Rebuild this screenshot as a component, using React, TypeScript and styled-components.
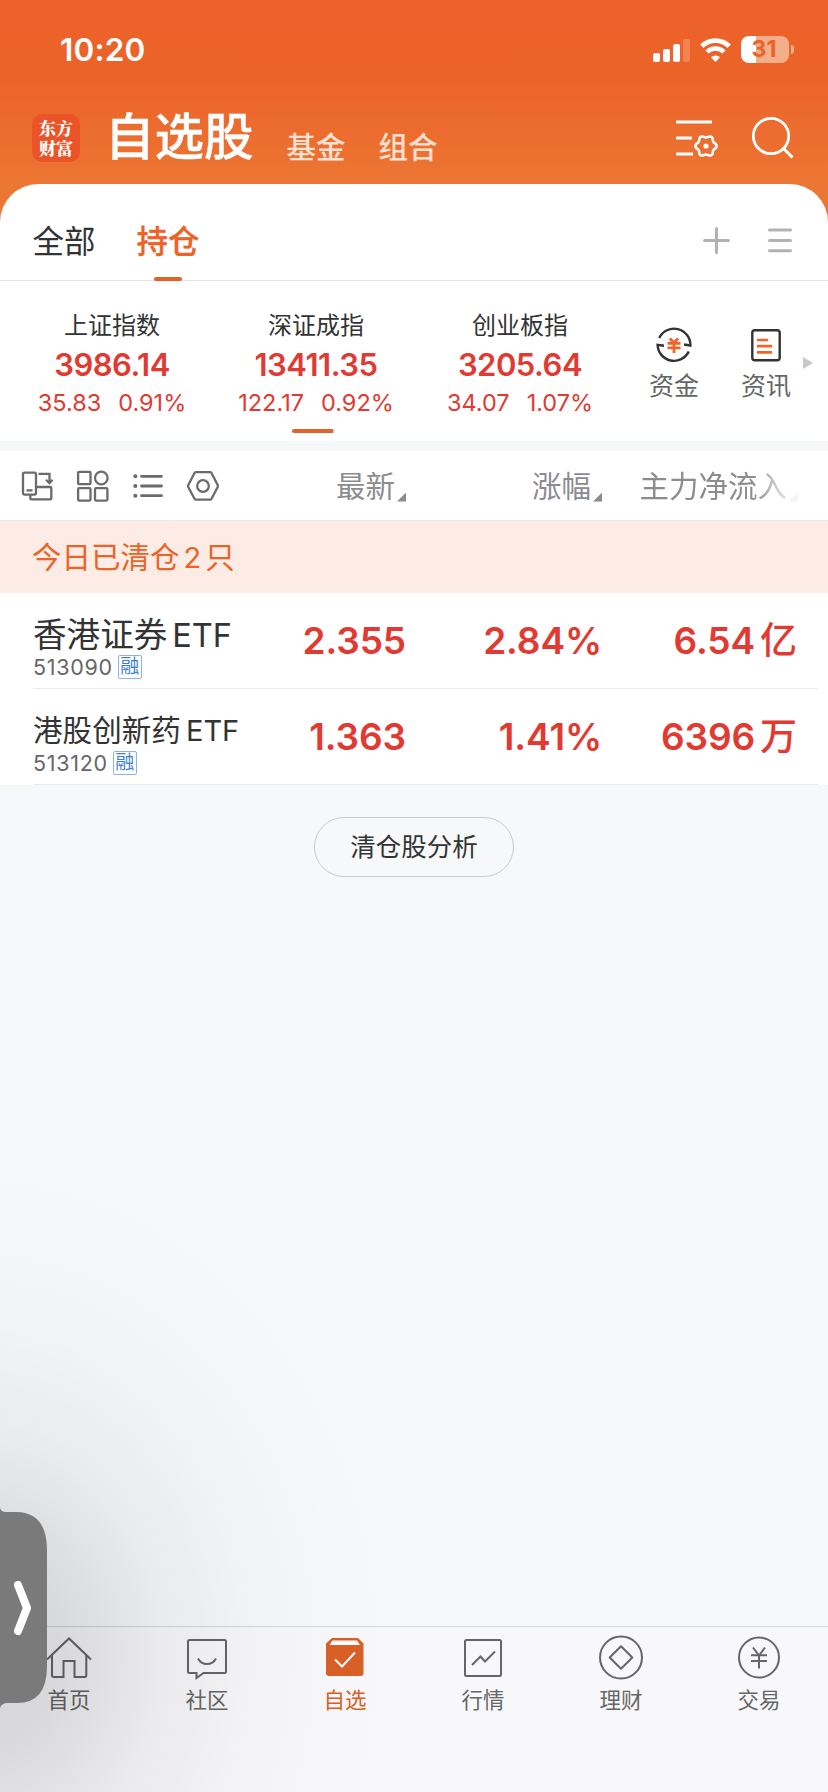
import React from "react";
import styled, { createGlobalStyle, css } from "styled-components";

const ORANGE = "#ec6227";
const RED = "#e03a32";

const GlobalStyle = createGlobalStyle`
  * { box-sizing: border-box; }
  body {
    margin: 0;
    background: #f7f8fa;
    font-family: Inter, "Noto Sans CJK SC", sans-serif;
    color: #333;
  }
  svg { display: block; flex: none; overflow: visible; }
`;

const Screen = styled.div`
  position: relative;
  display: flex;
  flex-direction: column;
  width: 828px;
  height: 1792px;
  overflow: hidden;
  background: #f7f8fa;
  white-space: nowrap;
`;

/* ---------- top area ---------- */

const Top = styled.div`
  background: linear-gradient(#ec622a 0, #ec632a 80px, #ec7633 184px, #ec7934 230px);
`;

const StatusBar = styled.div`
  display: flex;
  align-items: center;
  height: 99px;
  padding: 0 34px 0 60px;
`;

const Clock = styled.div`
  flex: 1;
  font-size: 31.5px;
  font-weight: 600;
  letter-spacing: 0.2px;
  line-height: 40px;
  color: #fff;
  padding-top: 1px;
`;

const StatusIcons = styled.div`
  display: flex;
  align-items: center;
  gap: 10px;
`;

const Battery = styled.div`
  display: flex;
  align-items: center;
  gap: 2px;
`;

const BatteryBody = styled.div`
  width: 48px;
  height: 27px;
  border-radius: 8px;
  background: linear-gradient(90deg, #fff 15px, #f4ae8a 15px);
  font-size: 23px;
  font-weight: 700;
  line-height: 27px;
  text-align: center;
  color: ${ORANGE};
  padding-right: 2px;
`;

const BatteryCap = styled.div`
  width: 3px;
  height: 9px;
  border-radius: 0 5px 5px 0;
  background: #f4ae8a;
`;

const Header = styled.div`
  display: flex;
  height: 85px;
  padding: 15px 34px 0 32px;
`;

const Logo = styled.div`
  width: 48px;
  height: 48px;
  padding: 4px 7px;
  border-radius: 10px;
  background: #eb5429;
  color: #fff;
  font-family: "Noto Serif CJK SC", "Noto Sans CJK SC", serif;
  font-size: 17px;
  font-weight: 900;
  line-height: 20px;
  white-space: normal;
`;

const MainTitle = styled.h1`
  margin: -3px 0 0 25px;
  font-size: 49.5px;
  font-weight: 500;
  line-height: 52px;
  letter-spacing: 0;
  color: #fff;
  -webkit-text-stroke: 0.4px #fff;
`;

const HeaderTabs = styled.div`
  display: flex;
  flex: 1;
  gap: 33px;
  margin-left: 33px;
  padding-top: 13px;
  font-size: 29.5px;
  font-weight: 500;
  line-height: 40px;
  color: #fde0d1;
`;

const HeaderIcons = styled.div`
  display: flex;
  gap: 34px;
  padding-top: 3px;
`;

/* ---------- content panel ---------- */

const Panel = styled.div`
  background: #fff;
  border-radius: 38px 38px 0 0;
`;

const GroupTabs = styled.div`
  display: flex;
  align-items: center;
  height: 97px;
  padding: 16px 36px 0 32px;
  border-bottom: 1px solid #e2e2e2;
`;

const GroupTab = styled.div<{ $active?: boolean }>`
  position: relative;
  width: 64px;
  height: 80px;
  margin-right: 40px;
  font-size: 31.5px;
  line-height: 84px;
  text-align: center;
  ${(p) =>
    p.$active &&
    css`
      color: ${ORANGE};
      font-weight: 500;
      -webkit-text-stroke: 0.3px ${ORANGE};
      &::after {
        content: "";
        position: absolute;
        left: 18px;
        bottom: -1px;
        width: 28px;
        height: 4px;
        border-radius: 2px;
        background: #e0632a;
      }
    `}
`;

const GroupActions = styled.div`
  display: flex;
  gap: 38px;
  margin-left: auto;
`;

const IndexStrip = styled.div`
  position: relative;
  display: flex;
  height: 160px;
  padding: 26px 15px 0 10px;
`;

const IndexCard = styled.div`
  flex: none;
  width: 204px;
  text-align: center;
`;

const IndexName = styled.div`
  font-size: 24px;
  line-height: 38px;
`;

const IndexValue = styled.div`
  font-size: 31px;
  font-weight: 600;
  line-height: 40px;
  letter-spacing: -0.5px;
  color: ${RED};
`;

const IndexChange = styled.div`
  display: flex;
  justify-content: center;
  gap: 17px;
  font-size: 23.5px;
  font-weight: 400;
  line-height: 35px;
  color: ${RED};
`;

const StripThumb = styled.div`
  position: absolute;
  left: 292px;
  bottom: 8px;
  width: 43px;
  height: 4px;
  border-radius: 2px;
  background: linear-gradient(90deg, #e0632a 41px, #dcdce0 41px);
`;

const Shortcuts = styled.div`
  display: flex;
  gap: 32px;
  margin-left: 22px;
`;

const Shortcut = styled.div`
  display: flex;
  flex-direction: column;
  align-items: center;
  width: 60px;
  padding-top: 18px;
  font-size: 25px;
  line-height: 42px;
  color: #666;
`;

const StripArrow = styled.div`
  margin: 50px 0 0 auto;
`;

const Band = styled.div`
  height: 10px;
  background: #f7f8fa;
`;

const TableHead = styled.div`
  display: grid;
  grid-template-columns: 220px 166px 196px 196px;
  align-items: center;
  height: 70px;
  padding-left: 20px;
  border-bottom: 1px solid #ececee;
`;

const Tools = styled.div`
  display: flex;
  gap: 23.5px;
`;

const HeadCell = styled.div<{ $fade?: boolean }>`
  display: flex;
  justify-content: flex-end;
  align-items: flex-end;
  gap: 2px;
  font-size: 29.5px;
  line-height: 42px;
  color: #8c8c8f;
  ${(p) => p.$fade && "mask-image: linear-gradient(90deg, #000 calc(100% - 45px), rgba(0, 0, 0, 0.1) calc(100% - 6px));"}
`;

const SortMark = styled.i`
  width: 9px;
  height: 9px;
  margin-bottom: 5px;
  background: #8c8c8f;
  clip-path: polygon(100% 0, 100% 100%, 0 100%);
`;

const Notice = styled.div`
  height: 72px;
  padding-left: 32px;
  font-size: 29.5px;
  line-height: 72px;
  color: ${ORANGE};
  background: #fcece5;
`;

const Count = styled.span`
  margin: 0 4px 0 4px;
  font-size: 29px;
`;

const Row = styled.div`
  display: grid;
  grid-template-columns: 240px 133px 196px 195px;
  height: 96px;
  margin: 0 10px 0 33px;
  border-bottom: 1px solid #ececee;
`;

const Stock = styled.div`
  display: flex;
  flex-direction: column;
  padding-top: 22px;
`;

const StockName = styled.div<{ $small?: boolean }>`
  height: 39px;
  font-size: ${(p) => (p.$small ? 29.6 : 33.6)}px;
  line-height: 39px;
  span {
    margin-left: 5px;
    font-size: ${(p) => (p.$small ? 29 : 32.5)}px;
  }
`;

const StockCode = styled.div`
  display: flex;
  align-items: center;
  gap: 5px;
  height: 25px;
  font-size: 21.5px;
  letter-spacing: 0.7px;
  color: #666;
`;

const MarginTag = styled.span`
  width: 24px;
  height: 24px;
  border: 1px solid #8fb2e6;
  border-radius: 2px;
  font-size: 19px;
  line-height: 22px;
  letter-spacing: 0;
  text-align: center;
  color: #3f7fd6;
`;

const Figure = styled.div`
  justify-self: end;
  font-size: 37px;
  font-weight: 600;
  line-height: 96px;
  letter-spacing: -0.1px;
  color: ${RED};
  span {
    margin-left: 5px;
    font-weight: 500;
  }
`;

const AnalyseButton = styled.button`
  align-self: center;
  width: 200px;
  height: 60px;
  margin-top: 32px;
  padding: 0;
  border: 1px solid #c9cacc;
  border-radius: 30px;
  background: transparent;
  font-family: inherit;
  font-size: 25.5px;
  line-height: 58px;
  color: #333;
`;

/* ---------- bottom bar ---------- */

const BottomNav = styled.nav`
  display: grid;
  grid-template-columns: repeat(6, 1fr);
  height: 166px;
  margin-top: auto;
  padding-top: 7px;
  background: #f8f8fa;
  border-top: 1px solid #d5d5d8;
`;

const NavItem = styled.div<{ $active?: boolean }>`
  display: flex;
  flex-direction: column;
  align-items: center;
  font-size: 21.5px;
  line-height: 30px;
  color: ${(p) => (p.$active ? "#d95f26" : "#666")};
  svg { margin-bottom: 5px; }
`;

/* ---------- floating handle ---------- */

const HandleShadow = styled.div`
  position: absolute;
  left: 0;
  bottom: 0;
  width: 460px;
  height: 760px;
  background: radial-gradient(
    ellipse 430px 510px at -20px 620px,
    rgba(0, 0, 0, 0.15) 0%,
    rgba(0, 0, 0, 0.12) 20%,
    rgba(0, 0, 0, 0.055) 42%,
    rgba(0, 0, 0, 0.018) 65%,
    rgba(0, 0, 0, 0.005) 86%,
    transparent 100%
  );
`;

const Handle = styled.div`
  position: absolute;
  left: 0;
  top: 1508px;
`;

/* ---------- icons ---------- */

const SignalIcon = () => (
  <svg width="37" height="24" viewBox="0 0 37 24" fill="#fff">
    <rect x="0" y="15" width="7" height="9" rx="2" />
    <rect x="10" y="11" width="7" height="13" rx="2" />
    <rect x="20" y="6" width="7" height="18" rx="2" />
    <rect x="30" y="1" width="7" height="23" rx="2" fill="#f2854f" />
  </svg>
);

const WifiIcon = () => (
  <svg width="31" height="24" viewBox="0 0 31 24" fill="none" stroke="#fff">
    <path d="M1.800 8.200A19.600 19.600 0 0 1 29.200 8.200" strokeWidth="4.8" />
    <path d="M7 14A12.200 12.200 0 0 1 24 14" strokeWidth="4.5" />
    <path d="M15.500 24 10.900 19.200A6.800 6.800 0 0 1 20.100 19.200Z" fill="#fff" stroke="none" />
  </svg>
);

const gearOutline = Array.from({ length: 96 }, (_, i) => {
  const a = (i / 96) * Math.PI * 2;
  const r = 9.5 + 1.1 * Math.cos(6 * a);
  return `${(30 + r * Math.cos(a)).toFixed(2)},${(29 + r * Math.sin(a)).toFixed(2)}`;
}).join(" ");

const ListGearIcon = () => (
  <svg width="42" height="42" viewBox="0 0 42 42" fill="none" stroke="#fff">
    <path d="M0 5H36M0 21H16M0 37H17" strokeWidth="3" />
    <polygon points={gearOutline} strokeWidth="2.6" strokeLinejoin="round" />
    <circle cx="30" cy="29" r="2.6" fill="#fff" stroke="none" />
  </svg>
);

const SearchIcon = () => (
  <svg width="42" height="42" viewBox="0 0 42 42" fill="none" stroke="#fff">
    <circle cx="19" cy="19" r="17.7" strokeWidth="2.8" />
    <path d="M31.500 31.500 40.500 40.500" strokeWidth="3" />
  </svg>
);

const PlusIcon = () => (
  <svg width="27" height="27" viewBox="0 0 27 27" stroke="#b2b2b2" strokeWidth="3" strokeLinecap="round">
    <path d="M1.600 13.500H25.400M13.500 1.600V25.400" />
  </svg>
);

const MenuIcon = () => (
  <svg width="24" height="27" viewBox="0 0 24 27" stroke="#b2b2b2" strokeWidth="3" strokeLinecap="round">
    <path d="M1.500 3H22.500M1.500 13.400H22.500M1.500 23.800H22.500" />
  </svg>
);

const FundsIcon = () => (
  <svg width="40" height="40" viewBox="0 0 40 40" fill="none" stroke="#333" strokeWidth="2.4">
    <path d="M5.200 13A16.400 16.400 0 0 1 36.400 20.500L30 19.500" />
    <path d="M34.800 26.500A16.400 16.400 0 0 1 3.600 19.800L10 20.800" />
    <path d="M15.800 13.500 20 17.800 24.200 13.500M13.500 18.300H26.500M13.500 22.800H26.500M20 17V28" stroke="#f0642a" strokeWidth="2.8" />
  </svg>
);

const NewsIcon = () => (
  <svg width="40" height="40" viewBox="0 0 40 40" fill="none">
    <rect x="6.300" y="5.300" width="27.400" height="30" rx="2.500" stroke="#333" strokeWidth="2.4" />
    <path d="M12 15H21M12 21.200H25M12 27.400H25" stroke="#f0642a" strokeWidth="2.7" strokeLinecap="round" />
  </svg>
);

const ToolSvg = styled.svg.attrs({ width: 32, height: 32, viewBox: "0 0 32 32", fill: "none" })`
  stroke: #6b6b6d;
  stroke-width: 2.3;
`;

const RotateTool = () => (
  <ToolSvg>
    <rect x="3" y="2.600" width="13" height="22" rx="1.500" />
    <path d="M6.500 20.300H12.500M16 17H30.200Q31.300 17 31.300 18V28.400Q31.300 29.400 30.200 29.400H11.500Q10.300 29.400 10.300 28.300V25" />
    <path d="M18.500 3.900H29.500V12M26 9.800 29.500 13.200 32.500 9.800" />
  </ToolSvg>
);

const GridTool = () => (
  <ToolSvg>
    <rect x="2.100" y="1.800" width="12.400" height="12.400" rx="1" />
    <circle cx="25.300" cy="8" r="6.300" />
    <rect x="2.100" y="18.200" width="12.400" height="12.400" rx="1" />
    <rect x="19" y="18.200" width="12.400" height="12.400" rx="1" />
  </ToolSvg>
);

const ListTool = () => (
  <ToolSvg>
    <path d="M10.500 6.300H30.500M10.500 16H30.500M10.500 25.700H30.500" strokeWidth="2.8" strokeLinecap="round" />
    <path d="M4.300 6.300H4.400M4.300 16H4.400M4.300 25.700H4.400" strokeWidth="4" strokeLinecap="round" />
  </ToolSvg>
);

const HexTool = () => (
  <ToolSvg>
    <path d="M9 2.200H23Q24 2.200 24.500 3L30.700 15Q31.100 16 30.700 17L24.500 28.800Q24 29.600 23 29.600H9Q8 29.600 7.500 28.800L1.300 17Q.9 16 1.300 15L7.500 3Q8 2.200 9 2.200Z" />
    <circle cx="16" cy="16" r="5.800" />
  </ToolSvg>
);

const NavSvg = styled.svg.attrs({ width: 46, height: 46, viewBox: "0 0 46 46", fill: "none" })`
  stroke: #666;
  stroke-width: 2;
`;

const HomeIcon = () => (
  <NavSvg>
    <path d="M1 25.500 23 4.500 45 25.500" />
    <path d="M6 21V41.300Q6 43 7.700 43H17.500V27H28.500V43H38.600Q40.300 43 40.300 41.300V21" />
  </NavSvg>
);

const CommunityIcon = () => (
  <NavSvg>
    <path d="M5.500 6H40.500Q42 6 42 7.500V37.500Q42 39 40.500 39H19.500L12.500 44V39H5.500Q4 39 4 37.500V7.500Q4 6 5.500 6Z" />
    <path d="M14 24.500Q17 30 23 30T32 24.500" />
  </NavSvg>
);

const WatchIcon = () => (
  <svg width="46" height="46" viewBox="0 0 46 46" fill="none">
    <path d="M10 4H36L41.500 9.500V39Q41.500 42 38.500 42H7Q4 42 4 39V9.500Z" fill="#d95f26" />
    <path d="M10.500 6.500H35L38 11H7.500Z" fill="#fff" />
    <path d="M13 25.500 20 32.500 33 18.500" stroke="#fff" strokeWidth="2" />
  </svg>
);

const QuotesIcon = () => (
  <NavSvg>
    <rect x="5" y="6" width="36" height="36" rx="1.500" />
    <path d="M12 31 20.500 22.500 25 27.500 35 17.500" />
  </NavSvg>
);

const WealthIcon = () => (
  <NavSvg>
    <circle cx="23" cy="23.500" r="21" />
    <path d="M23 12.300 34.300 23.500 23 34.700 11.700 23.500Z" strokeLinejoin="round" />
  </NavSvg>
);

const TradeIcon = () => (
  <NavSvg>
    <circle cx="23" cy="23.500" r="20" />
    <path d="M17 13.500 23 21.500 29 13.500M15 21.300H31M15 27H31M23 21V34.500" />
  </NavSvg>
);

const indices = [
  { name: "上证指数", value: "3986.14", diff: "35.83", pct: "0.91%" },
  { name: "深证成指", value: "13411.35", diff: "122.17", pct: "0.92%" },
  { name: "创业板指", value: "3205.64", diff: "34.07", pct: "1.07%" },
];

const stocks = [
  { name: "香港证券", code: "513090", last: "2.355", pct: "2.84%", flow: "6.54", unit: "亿" },
  { name: "港股创新药", code: "513120", last: "1.363", pct: "1.41%", flow: "6396", unit: "万", small: true },
];

const navItems = [
  { label: "首页", icon: <HomeIcon /> },
  { label: "社区", icon: <CommunityIcon /> },
  { label: "自选", icon: <WatchIcon />, active: true },
  { label: "行情", icon: <QuotesIcon /> },
  { label: "理财", icon: <WealthIcon /> },
  { label: "交易", icon: <TradeIcon /> },
];

export default function App() {
  return (
    <>
      <GlobalStyle />
      <Screen>
        <Top>
          <StatusBar>
            <Clock>10:20</Clock>
            <StatusIcons>
              <SignalIcon />
              <WifiIcon />
              <Battery>
                <BatteryBody>31</BatteryBody>
                <BatteryCap />
              </Battery>
            </StatusIcons>
          </StatusBar>
          <Header>
            <Logo>东方财富</Logo>
            <MainTitle>自选股</MainTitle>
            <HeaderTabs>
              <span>基金</span>
              <span>组合</span>
            </HeaderTabs>
            <HeaderIcons>
              <ListGearIcon />
              <SearchIcon />
            </HeaderIcons>
          </Header>
          <Panel>
            <GroupTabs>
              <GroupTab>全部</GroupTab>
              <GroupTab $active>持仓</GroupTab>
              <GroupActions>
                <PlusIcon />
                <MenuIcon />
              </GroupActions>
            </GroupTabs>
            <IndexStrip>
              {indices.map((it) => (
                <IndexCard key={it.name}>
                  <IndexName>{it.name}</IndexName>
                  <IndexValue>{it.value}</IndexValue>
                  <IndexChange>
                    <span>{it.diff}</span>
                    <span>{it.pct}</span>
                  </IndexChange>
                </IndexCard>
              ))}
              <StripThumb />
              <Shortcuts>
                <Shortcut>
                  <FundsIcon />
                  资金
                </Shortcut>
                <Shortcut>
                  <NewsIcon />
                  资讯
                </Shortcut>
              </Shortcuts>
              <StripArrow>
                <svg width="10" height="12" viewBox="0 0 10 12">
                  <path d="M0 0 10 6 0 12Z" fill="#c8c8c8" />
                </svg>
              </StripArrow>
            </IndexStrip>
            <Band />
            <TableHead>
              <Tools>
                <RotateTool />
                <GridTool />
                <ListTool />
                <HexTool />
              </Tools>
              <HeadCell>
                最新
                <SortMark />
              </HeadCell>
              <HeadCell>
                涨幅
                <SortMark />
              </HeadCell>
              <HeadCell $fade>
                主力净流入
                <SortMark />
              </HeadCell>
            </TableHead>
            <Notice>
              今日已清仓<Count>2</Count>只
            </Notice>
            {stocks.map((s) => (
              <Row key={s.code}>
                <Stock>
                  <StockName $small={s.small}>
                    {s.name}
                    <span>ETF</span>
                  </StockName>
                  <StockCode>
                    {s.code}
                    <MarginTag>融</MarginTag>
                  </StockCode>
                </Stock>
                <Figure>{s.last}</Figure>
                <Figure>{s.pct}</Figure>
                <Figure>
                  {s.flow}
                  <span>{s.unit}</span>
                </Figure>
              </Row>
            ))}
          </Panel>
        </Top>
        <AnalyseButton>清仓股分析</AnalyseButton>
        <BottomNav>
          {navItems.map((n) => (
            <NavItem key={n.label} $active={n.active}>
              {n.icon}
              {n.label}
            </NavItem>
          ))}
        </BottomNav>
        <HandleShadow />
        <Handle>
          <svg width="48" height="200" viewBox="0 0 48 200">
            <path d="M0 0Q1 4 6 4H17Q47 5 47 42V158Q47 195 17 195H6Q1 196 0 200Z" fill="#7a7a7b" />
            <path d="M18 77 27 100 18 123" fill="none" stroke="#fff" strokeWidth="8" strokeLinecap="round" strokeLinejoin="round" />
          </svg>
        </Handle>
      </Screen>
    </>
  );
}
